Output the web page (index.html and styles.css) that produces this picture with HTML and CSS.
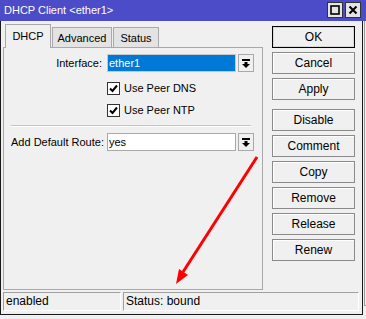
FILE: index.html
```html
<!DOCTYPE html>
<html lang="en">
<head>
    <meta charset="UTF-8">
    <title>DHCP Client &lt;ether1&gt;</title>
    <link rel="stylesheet" href="styles.css">
</head>
<body>
    <div class="window">
        <div class="titlebar">
            <span class="title">DHCP Client &lt;ether1&gt;</span>
            <div class="title-btns">
                <span class="tbtn">
                    <svg width="10" height="10" viewBox="0 0 10 10"><rect x="1" y="1" width="8" height="8" fill="none" stroke="#000" stroke-width="1.6"/></svg>
                </span>
                <span class="tbtn">
                    <svg width="10" height="10" viewBox="0 0 10 10"><path d="M1.5 1.5 L8.5 8.5 M8.5 1.5 L1.5 8.5" stroke="#000" stroke-width="2"/></svg>
                </span>
            </div>
        </div>

        <div class="main">
            <div class="left">
                <div class="tabs">
                    <div class="tab active">DHCP</div>
                    <div class="tab adv">Advanced</div>
                    <div class="tab stat">Status</div>
                </div>
                <div class="panel">
                    <div class="row">
                        <span class="lbl">Interface:</span>
                        <div class="field selected">ether1</div>
                        <span class="drop">
                            <svg width="8" height="9" viewBox="0 0 8 9"><rect x="0" y="0" width="8" height="2" fill="#000"/><rect x="2.5" y="3" width="3" height="2" fill="#000"/><polygon points="0,5 8,5 4,9" fill="#000"/></svg>
                        </span>
                    </div>
                    <div class="check-row first">
                        <span class="cb">
                            <svg width="9" height="9" viewBox="0 0 9 9"><path d="M1 4.5 L3.5 7 L8 1.5" fill="none" stroke="#000" stroke-width="2"/></svg>
                        </span>
                        Use Peer DNS
                    </div>
                    <div class="check-row">
                        <span class="cb">
                            <svg width="9" height="9" viewBox="0 0 9 9"><path d="M1 4.5 L3.5 7 L8 1.5" fill="none" stroke="#000" stroke-width="2"/></svg>
                        </span>
                        Use Peer NTP
                    </div>
                    <div class="sep"></div>
                    <div class="row route">
                        <span class="lbl">Add Default Route:</span>
                        <div class="field">yes</div>
                        <span class="drop">
                            <svg width="8" height="9" viewBox="0 0 8 9"><rect x="0" y="0" width="8" height="2" fill="#000"/><rect x="2.5" y="3" width="3" height="2" fill="#000"/><polygon points="0,5 8,5 4,9" fill="#000"/></svg>
                        </span>
                    </div>
                </div>
            </div>

            <div class="buttons">
                <div class="btn default">OK</div>
                <div class="btn">Cancel</div>
                <div class="btn">Apply</div>
                <div class="btn spaced">Disable</div>
                <div class="btn">Comment</div>
                <div class="btn">Copy</div>
                <div class="btn">Remove</div>
                <div class="btn">Release</div>
                <div class="btn">Renew</div>
            </div>
        </div>

        <div class="statusbar">
            <div class="status-cell enabled">enabled</div>
            <div class="status-cell state">Status: bound</div>
        </div>
    </div>
    <div class="behind"></div>

    <svg class="arrow" width="366" height="319" viewBox="0 0 366 319">
        <line x1="257" y1="157" x2="183" y2="272" stroke="#ff0000" stroke-width="3"/>
        <polygon points="176,284 188,275 179,269" fill="#ff0000"/>
    </svg>
</body>
</html>
```

FILE: styles.css
```css
* {
    margin: 0;
    padding: 0;
    box-sizing: border-box;
}
body {
    font-family: 'Liberation Sans', Arial, sans-serif;
    font-size: 11px;
    color: #000;
    background-color: #f0f0f0;
    width: 366px;
    height: 319px;
    position: relative;
    overflow: hidden;
}
.window {
    width: 363px;
    height: 315px;
    border: 1px solid #1a1a1a;
    border-top: none;
    background-color: #f0f0f0;
}
.titlebar {
    height: 21px;
    margin-left: -1px;
    margin-right: -4px;
    background-color: #4c4cc8;
    display: flex;
    justify-content: space-between;
    align-items: flex-start;
}
.title {
    color: #fff;
    padding-left: 4px;
    line-height: 20px;
}
.title-btns {
    display: flex;
    gap: 2px;
    padding-top: 2px;
    padding-right: 5px;
}
.tbtn {
    width: 16px;
    height: 16px;
    background-color: #e4e4e4;
    border: 1px solid #333;
    display: flex;
    justify-content: center;
    align-items: center;
}
.main {
    display: flex;
    padding-left: 2px;
}
.left {
    width: 260px;
}
.tabs {
    height: 26px;
    display: flex;
    align-items: flex-end;
    padding-left: 2px;
}
.tab {
    height: 20px;
    border: 1px solid #a9a9a9;
    border-bottom: none;
    background-color: #e3e3e3;
    display: flex;
    justify-content: center;
    align-items: center;
    padding-top: 1px;
}
.tab.active {
    width: 46px;
    height: 24px;
    margin-bottom: -1px;
    background-color: #f0f0f0;
    position: relative;
    padding-top: 0;
    padding-bottom: 1px;
}
.tab.adv {
    width: 60px;
    margin-left: 1px;
}
.tab.stat {
    width: 46px;
    margin-left: 1px;
}
.panel {
    height: 243px;
    border: 1px solid #a9a9a9;
    padding: 6px 0 0 7px;
}
.row {
    display: flex;
    align-items: center;
    height: 18px;
}
.lbl {
    width: 96px;
    padding-right: 5px;
    text-align: right;
    white-space: nowrap;
}
.field {
    width: 129px;
    height: 18px;
    border: 1px solid #a9a9a9;
    background-color: #fff;
    line-height: 16px;
    padding-left: 1px;
}
.field.selected {
    background-color: #0078d7;
    color: #fff;
    border-color: #c8c8c8;
}
.drop {
    width: 16px;
    height: 18px;
    margin-left: 2px;
    border: 1px solid #a9a9a9;
    display: flex;
    justify-content: center;
    align-items: center;
}
.check-row {
    height: 22px;
    display: flex;
    align-items: center;
    padding-left: 96px;
}
.check-row.first {
    margin-top: 5px;
}
.cb {
    width: 13px;
    height: 13px;
    border: 1px solid #333;
    background-color: #fff;
    margin-right: 4px;
    display: flex;
    justify-content: center;
    align-items: center;
}
.sep {
    width: 240px;
    height: 2px;
    margin-top: 4px;
    border-top: 1px solid #c4c4c4;
    border-bottom: 1px solid #fff;
}
.row.route {
    margin-top: 6px;
}
.buttons {
    width: 83px;
    margin-left: 9px;
    padding-top: 5px;
    display: flex;
    flex-direction: column;
    gap: 4px;
}
.btn {
    height: 22px;
    border: 1px solid #8a8a8a;
    box-shadow: inset 1px 1px 0 #fff;
    display: flex;
    justify-content: center;
    align-items: center;
    font-size: 12px;
}
.btn.default {
    border-color: #000;
    box-shadow: inset 0 0 0 1px #d8d8d8;
}
.btn.spaced {
    margin-top: 5px;
}
.statusbar {
    display: flex;
    gap: 2px;
    margin-top: 2px;
    padding-left: 2px;
}
.status-cell {
    height: 19px;
    border: 1px solid;
    border-color: #a0a0a0 #fff #fff #a0a0a0;
    line-height: 17px;
    padding-left: 2px;
    font-size: 12px;
}
.enabled {
    width: 118px;
}
.state {
    width: 236px;
}
/* edge of the window lying behind this one */
.behind {
    position: absolute;
    left: 364px;
    top: 21px;
    width: 2px;
    height: 285px;
    border-left: 1px solid #9a9a9a;
    border-bottom: 1px solid #9a9a9a;
}
.arrow {
    position: absolute;
    left: 0;
    top: 0;
}
```
